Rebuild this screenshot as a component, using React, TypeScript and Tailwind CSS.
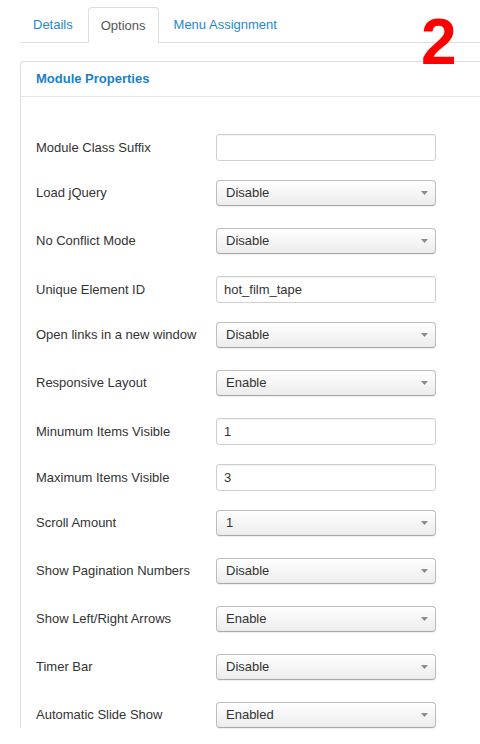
const rows: { label: string; kind: "input" | "select"; value: string }[] = [
  { label: "Module Class Suffix", kind: "input", value: "" },
  { label: "Load jQuery", kind: "select", value: "Disable" },
  { label: "No Conflict Mode", kind: "select", value: "Disable" },
  { label: "Unique Element ID", kind: "input", value: "hot_film_tape" },
  { label: "Open links in a new window", kind: "select", value: "Disable" },
  { label: "Responsive Layout", kind: "select", value: "Enable" },
  { label: "Minumum Items Visible", kind: "input", value: "1" },
  { label: "Maximum Items Visible", kind: "input", value: "3" },
  { label: "Scroll Amount", kind: "select", value: "1" },
  { label: "Show Pagination Numbers", kind: "select", value: "Disable" },
  { label: "Show Left/Right Arrows", kind: "select", value: "Enable" },
  { label: "Timer Bar", kind: "select", value: "Disable" },
  { label: "Automatic Slide Show", kind: "select", value: "Enabled" },
];

function TextField({ value }: { value: string }) {
  return (
    <div className="flex h-[27px] w-[220px] items-center rounded-[3px] border border-[#cfcfcf] bg-white pl-[7px] text-[13px] text-[#333] shadow-[inset_0_1px_1px_rgba(0,0,0,0.06)]">
      {value}
    </div>
  );
}

function SelectField({ value }: { value: string }) {
  return (
    <div className="flex h-[26px] w-[220px] items-center justify-between rounded-[4px] border border-[#bdbdbd] border-b-[#a8a8a8] bg-gradient-to-b from-white to-[#ececec] pl-[9px] pr-[7px] text-[13px] text-[#333] shadow-[0_1px_1px_rgba(0,0,0,0.07)]">
      <span>{value}</span>
      <svg width="7" height="4" viewBox="0 0 7 4">
        <path d="M0 0 L7 0 L3.5 4 Z" fill="#8a8a8a" />
      </svg>
    </div>
  );
}

export default function App() {
  return (
    <div
      className="relative h-[744px] w-[480px] overflow-hidden bg-white pl-[20px]"
      style={{ fontFamily: '"Liberation Sans", Arial, sans-serif' }}
    >
      {/* tabs */}
      <div className="mt-[7px] flex h-[36px] border-b border-[#ddd] text-[13px]">
        <div className="mr-[2px] flex h-[35px] items-center px-[13px] text-[#1e88d0]">Details</div>
        <div className="-mb-px mr-[2px] flex h-[36px] items-center rounded-t-[4px] border border-b-0 border-[#ddd] bg-white px-[12px] text-[#555]">
          Options
        </div>
        <div className="flex h-[35px] items-center px-[13px] text-[#1e88d0]">Menu Assignment</div>
      </div>

      <div className="absolute left-[421px] top-[10px] text-[64px] font-bold leading-none text-[#ff0000]">2</div>

      {/* panel */}
      <div className="mt-[18px] w-[480px] rounded-tl-[4px] border-l border-t border-[#ddd]">
        <div className="flex h-[35px] items-center border-b border-[#e3e3e3] pl-[15px] text-[13px] font-bold text-[#1a7fc9]">
          Module Properties
        </div>
        <div className="pl-[15px] pt-[37px]">
          {rows.map((r) => (
            <div
              key={r.label}
              className={
                r.kind === "input"
                  ? "mb-[19px] flex h-[27px] items-center"
                  : "mb-[22px] flex h-[26px] items-center"
              }
            >
              <div className="w-[180px] text-[13px] text-[#333]">{r.label}</div>
              {r.kind === "input" ? <TextField value={r.value} /> : <SelectField value={r.value} />}
            </div>
          ))}
        </div>
      </div>
    </div>
  );
}
